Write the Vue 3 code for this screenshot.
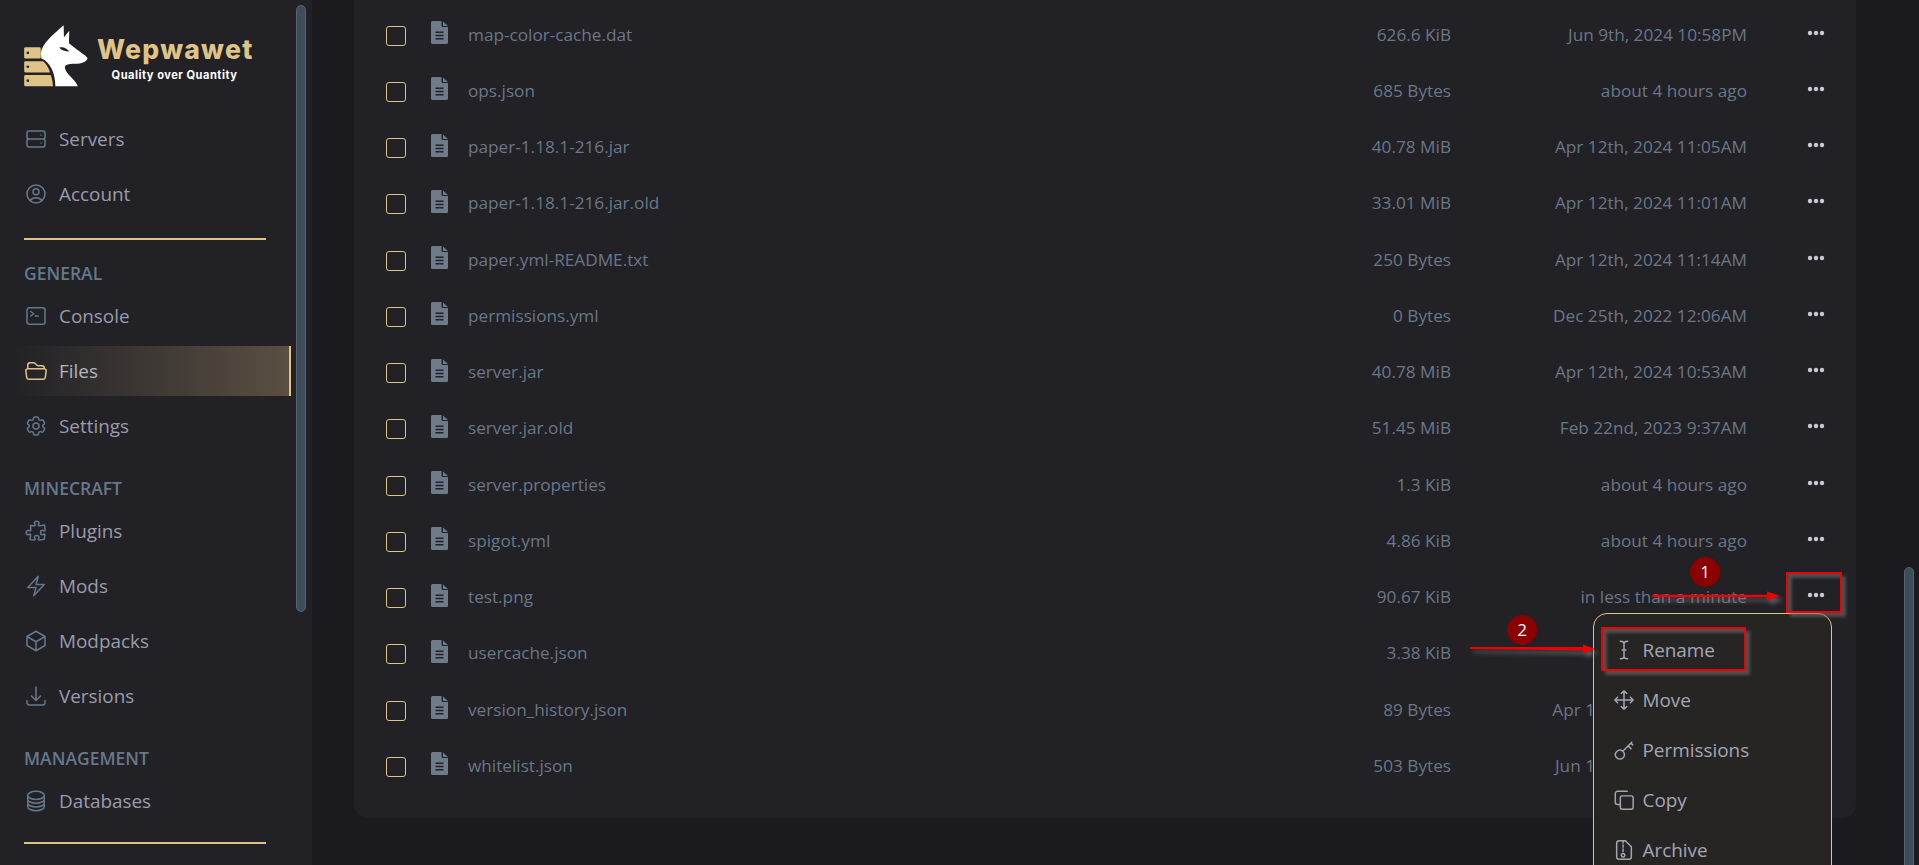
<script setup>
const icons = {
  server: 'M5 12h14M5 12a2 2 0 01-2-2V6a2 2 0 012-2h14a2 2 0 012 2v4a2 2 0 01-2 2M5 12a2 2 0 00-2 2v4a2 2 0 002 2h14a2 2 0 002-2v-4a2 2 0 00-2-2m-2-4h.01M17 16h.01',
  user: 'M17.982 18.725A7.488 7.488 0 0012 15.75a7.488 7.488 0 00-5.982 2.975m11.963 0a9 9 0 10-11.963 0m11.963 0A8.966 8.966 0 0112 21a8.966 8.966 0 01-5.982-2.275M15 9.75a3 3 0 11-6 0 3 3 0 016 0z',
  console: 'M6.75 7.5l3 2.25-3 2.25m4.5 0h3m-9 8.25h13.5A2.25 2.25 0 0021 18V6a2.25 2.25 0 00-2.25-2.25H5.25A2.25 2.25 0 003 6v12a2.25 2.25 0 002.25 2.25z',
  folder: 'M3.75 9.776c.112-.017.227-.026.344-.026h15.812c.117 0 .232.009.344.026m-16.5 0a2.25 2.25 0 00-1.883 2.542l.857 6a2.25 2.25 0 002.227 1.932H19.05a2.25 2.25 0 002.227-1.932l.857-6a2.25 2.25 0 00-1.883-2.542m-16.5 0V6A2.25 2.25 0 016 3.75h3.879a1.5 1.5 0 011.06.44l2.122 2.12a1.5 1.5 0 001.06.44H18A2.25 2.25 0 0120.25 9v.776',
  cog: 'M9.594 3.94c.09-.542.56-.94 1.11-.94h2.593c.55 0 1.02.398 1.11.94l.213 1.281c.063.374.313.686.645.87.074.04.147.083.22.127.324.196.72.257 1.075.124l1.217-.456a1.125 1.125 0 011.37.49l1.296 2.247a1.125 1.125 0 01-.26 1.431l-1.003.827c-.293.24-.438.613-.431.992a6.759 6.759 0 010 .255c-.007.378.138.75.43.99l1.005.828c.424.35.534.954.26 1.43l-1.298 2.247a1.125 1.125 0 01-1.369.491l-1.217-.456c-.355-.133-.75-.072-1.076.124a6.57 6.57 0 01-.22.128c-.331.183-.581.495-.644.869l-.213 1.28c-.09.543-.56.941-1.11.941h-2.594c-.55 0-1.02-.398-1.11-.94l-.213-1.281c-.062-.374-.312-.686-.644-.87a6.52 6.52 0 01-.22-.127c-.325-.196-.72-.257-1.076-.124l-1.217.456a1.125 1.125 0 01-1.369-.49l-1.297-2.247a1.125 1.125 0 01.26-1.431l1.004-.827c.292-.24.437-.613.43-.992a6.932 6.932 0 010-.255c.007-.378-.138-.75-.43-.99l-1.004-.828a1.125 1.125 0 01-.26-1.43l1.297-2.247a1.125 1.125 0 011.37-.491l1.216.456c.356.133.751.072 1.076-.124.072-.044.146-.087.22-.128.332-.183.582-.495.644-.869l.214-1.281zM15 12a3 3 0 11-6 0 3 3 0 016 0z',
  puzzle: 'M14.25 6.087c0-.355.186-.676.401-.959.221-.29.349-.634.349-1.003 0-1.036-1.007-1.875-2.25-1.875s-2.25.84-2.25 1.875c0 .369.128.713.349 1.003.215.283.401.604.401.959a.64.64 0 01-.657.643 48.39 48.39 0 01-4.163-.3c.186 1.613.293 3.25.315 4.907a.656.656 0 01-.658.663c-.355 0-.676-.186-.959-.401a1.647 1.647 0 00-1.003-.349c-1.036 0-1.875 1.007-1.875 2.25s.84 2.25 1.875 2.25c.369 0 .713-.128 1.003-.349.283-.215.604-.401.959-.401.31 0 .555.26.532.57a48.039 48.039 0 01-.642 5.056c1.518.19 3.058.309 4.616.354a.64.64 0 00.657-.643c0-.355-.186-.676-.401-.959a1.647 1.647 0 01-.349-1.003c0-1.035 1.008-1.875 2.25-1.875 1.243 0 2.25.84 2.25 1.875 0 .369-.128.713-.349 1.003-.215.283-.4.604-.4.959 0 .333.277.599.61.58a48.1 48.1 0 005.427-.63 48.05 48.05 0 00.582-4.717.532.532 0 00-.533-.57c-.355 0-.676.186-.959.401-.29.221-.634.349-1.003.349-1.035 0-1.875-1.007-1.875-2.25s.84-2.25 1.875-2.25c.37 0 .713.128 1.003.349.283.215.604.401.96.401a.656.656 0 00.658-.663 48.422 48.422 0 00-.37-5.36c-1.886.342-3.81.574-5.766.689a.578.578 0 01-.61-.58z',
  bolt: 'M3.75 13.5l10.5-11.25L12 10.5h8.25L9.75 21.75 12 13.5H3.75z',
  cube: 'M21 7.5l-9-5.25L3 7.5m18 0l-9 5.25m9-5.25v9l-9 5.25M3 7.5l9 5.25M3 7.5v9l9 5.25m0-9v9',
  download: 'M3 16.5v2.25A2.25 2.25 0 005.25 21h13.5A2.25 2.25 0 0021 18.75V16.5M16.5 12L12 16.5m0 0L7.5 12m4.5 4.5V3',
  db: 'M20.25 6.375c0 2.278-3.694 4.125-8.25 4.125S3.75 8.653 3.75 6.375m16.5 0c0-2.278-3.694-4.125-8.25-4.125S3.75 4.097 3.75 6.375m16.5 0v11.25c0 2.278-3.694 4.125-8.25 4.125s-8.25-1.847-8.25-4.125V6.375m16.5 0v3.75m-16.5-3.75v3.75m16.5 0v3.75C20.25 16.153 16.556 18 12 18s-8.25-1.847-8.25-4.125v-3.75m16.5 0c0 2.278-3.694 4.125-8.25 4.125s-8.25-1.847-8.25-4.125',
  rename: 'M8 2.500c2.500 0 4 .8 4 2.500v14c0 1.700-1.500 2.500-4 2.500M16 2.500c-2.500 0-4 .8-4 2.500v14c0 1.700 1.500 2.500 4 2.500M10 12h4',
  move: 'M12 2v20M2 12h20M9 5l3-3 3 3M9 19l3 3 3-3M5 9l-3 3 3 3M19 9l3 3-3 3',
  key: 'M10.700 13.300a4.900 4.900 0 1 1-6.900 6.900 4.900 4.900 0 0 1 6.900-6.900zM10.700 13.300 20.500 3.500M16.500 7.500l3 3M19.500 4.500l2 2',
  copy: 'M7.500 2.500h8M7 17H5A2.500 2.500 0 0 1 2.500 14.500V5A2.500 2.500 0 0 1 5 2.500h2.500M10 7.500h10a2 2 0 0 1 2 2v10.500a2 2 0 0 1-2 2H10a2 2 0 0 1-2-2V9.500a2 2 0 0 1 2-2z',
  archive: 'M7 2h6.500L20 8.500V19.500a2.500 2.500 0 0 1-2.500 2.500H6.500A2.500 2.500 0 0 1 4 19.500V5A3 3 0 0 1 7 2zM11 2v2.500M11 6.500v2.500M11 11v2.500M11 15.800a1.900 1.900 0 1 1-.01 0'
}

const groups = [
  { items: [{ n: 'Servers', i: 'server' }, { n: 'Account', i: 'user' }], divider: 'top' },
  { label: 'GENERAL', items: [{ n: 'Console', i: 'console' }, { n: 'Files', i: 'folder', active: true }, { n: 'Settings', i: 'cog' }] },
  { label: 'MINECRAFT', items: [{ n: 'Plugins', i: 'puzzle' }, { n: 'Mods', i: 'bolt' }, { n: 'Modpacks', i: 'cube' }, { n: 'Versions', i: 'download' }] },
  { label: 'MANAGEMENT', items: [{ n: 'Databases', i: 'db' }], divider: 'bottom' }
]

const files = [
  ['map-color-cache.dat', '626.6 KiB', 'Jun 9th, 2024 10:58PM'],
  ['ops.json', '685 Bytes', 'about 4 hours ago'],
  ['paper-1.18.1-216.jar', '40.78 MiB', 'Apr 12th, 2024 11:05AM'],
  ['paper-1.18.1-216.jar.old', '33.01 MiB', 'Apr 12th, 2024 11:01AM'],
  ['paper.yml-README.txt', '250 Bytes', 'Apr 12th, 2024 11:14AM'],
  ['permissions.yml', '0 Bytes', 'Dec 25th, 2022 12:06AM'],
  ['server.jar', '40.78 MiB', 'Apr 12th, 2024 10:53AM'],
  ['server.jar.old', '51.45 MiB', 'Feb 22nd, 2023 9:37AM'],
  ['server.properties', '1.3 KiB', 'about 4 hours ago'],
  ['spigot.yml', '4.86 KiB', 'about 4 hours ago'],
  ['test.png', '90.67 KiB', 'in less than a minute'],
  ['usercache.json', '3.38 KiB', '', true],
  ['version_history.json', '89 Bytes', 'Apr 1', true],
  ['whitelist.json', '503 Bytes', 'Jun 1', true]
]

const menu = [
  { n: 'Rename', i: 'rename' },
  { n: 'Move', i: 'move' },
  { n: 'Permissions', i: 'key' },
  { n: 'Copy', i: 'copy' },
  { n: 'Archive', i: 'archive' }
]
</script>

<template>
  <div class="page">
    <aside class="sidebar">
      <div class="logo">
        <svg class="logo-mark" viewBox="72 75 192 187" width="64" height="62">
          <rect x="72" y="142" width="50" height="34" rx="4" fill="#dfc387" />
          <path d="M76 184h52c10 6 18 20 22 34H76a4 4 0 0 1-4-4v-26a4 4 0 0 1 4-4z" fill="#dfc387" />
          <path d="M76 226h76c4 10 6 22 7 34H76a4 4 0 0 1-4-4v-26a4 4 0 0 1 4-4z" fill="#dfc387" />
          <circle cx="83" cy="159" r="4" fill="#212126" />
          <circle cx="83" cy="201" r="4" fill="#212126" />
          <circle cx="83" cy="243" r="4" fill="#212126" />
          <path d="M122 160C127 130 155 108 191 76L192 112L208 92L207 130L232 150C245 160 258 167 263 175C262 185 245 192 225 192C205 192 193 195 195 205C198 225 226 238 234 260L166 260C166 220 150 186 124 176Z" fill="#fff" />
          <path d="M178 143C190 139 200 145 208 155C195 155 185 152 178 143Z" fill="#212126" />
        </svg>
        <div class="logo-text">
          <div class="logo-title">Wepwawet</div>
          <div class="logo-sub">Quality over Quantity</div>
        </div>
      </div>
      <nav>
        <section v-for="g in groups" :key="g.items[0].n">
          <div v-if="g.label" class="label">{{ g.label }}</div>
          <a v-for="it in g.items" :key="it.n" class="nav-item" :class="{ active: it.active }">
            <svg class="nav-icon" viewBox="0 0 24 24" width="24" height="24" fill="none" stroke="currentColor" stroke-width="1.5" stroke-linecap="round" stroke-linejoin="round"><path :d="icons[it.i]" /></svg>
            <span>{{ it.n }}</span>
          </a>
          <div v-if="g.divider" class="divider" :class="g.divider"></div>
        </section>
      </nav>
      <div class="thumb thumb-left"></div>
    </aside>

    <main class="main">
      <div class="card">
        <div v-for="f in files" :key="f[0]" class="row">
          <span class="check"></span>
          <svg class="file-icon" viewBox="0 0 17 23" width="17" height="23">
            <path fill-rule="evenodd" d="M1.500 0H10.500V4.500a1.500 1.500 0 0 0 1.500 1.500H17V21.500a1.500 1.500 0 0 1-1.500 1.500h-14A1.500 1.500 0 0 1 0 21.500V1.500A1.500 1.500 0 0 1 1.500 0ZM4.500 10.500v1.500h8v-1.500ZM4.500 13.800v1.500h8v-1.500ZM4.500 17.100v1.500h8v-1.500Z" fill="#6e7b8b" />
            <path d="M12 0.500 17 5h-5z" fill="#6e7b8b" />
          </svg>
          <span class="name">{{ f[0] }}</span>
          <span class="size">{{ f[1] }}</span>
          <span class="date" :class="{ cut: f[3] }">{{ f[2] }}</span>
          <svg class="dots" viewBox="0 0 18 6" width="18" height="6"><circle cx="3" cy="3" r="2.200" /><circle cx="9" cy="3" r="2.200" /><circle cx="15" cy="3" r="2.200" /></svg>
        </div>
      </div>
    </main>

    <div class="thumb thumb-right"></div>

    <div class="menu">
      <div v-for="m in menu" :key="m.n" class="menu-item">
        <svg viewBox="0 0 24 24" width="22" height="22" fill="none" stroke="currentColor" stroke-width="1.600" stroke-linecap="round" stroke-linejoin="round"><path :d="icons[m.i]" /></svg>
        <span>{{ m.n }}</span>
      </div>
    </div>

    <svg class="arrows" viewBox="0 0 1919 865" width="1919" height="865">
      <g fill="#f00000" stroke="none">
        <path d="M1652 594.800H1767V591.500L1780 596 1767 600.500V597.200H1652Z" />
        <path d="M1470 647H1583V644.500L1595 649 1583 653.500V650.500L1470 649Z" />
      </g>
    </svg>
    <div class="box box-one"></div>
    <div class="box box-two"></div>
    <div class="badge badge-one">1</div>
    <div class="badge badge-two">2</div>
  </div>
</template>

<style>
html, body { margin: 0; background: #1b1b1f; }
</style>

<style scoped>
.page {
  position: relative;
  display: flex;
  width: 1919px;
  height: 865px;
  overflow: hidden;
  background: #1b1b1f;
  font-family: "Open Sans", "Noto Sans", sans-serif;
}
.sidebar {
  flex: 0 0 312px;
  box-sizing: border-box;
  background: #212126;
}
.logo {
  display: flex;
  height: 111.500px;
  padding: 25px 0 0 24px;
  box-sizing: border-box;
}
.logo-text {
  margin: 10px 0 0 9px;
  text-align: center;
  width: 155px;
}
.logo-title {
  font-family: Inter, sans-serif;
  font-weight: 800;
  font-size: 26.500px;
  line-height: 28px;
  letter-spacing: 1.300px;
  color: #dfc387;
  white-space: nowrap;
}
.logo-sub {
  margin-top: 5px;
  font-family: Inter, sans-serif;
  font-weight: 700;
  font-size: 11.100px;
  line-height: 14px;
  letter-spacing: .5px;
  color: #fff;
  white-space: nowrap;
}
.label {
  padding: 26px 0 7px 24px;
  font-size: 17.500px;
  line-height: 17px;
  font-weight: 600;
  color: #66788a;
}
.divider {
  height: 2px;
  margin: 16.500px 46px -1.500px 24px;
  background: #dfc387;
}
.divider.bottom { margin-top: 13.500px; }
.nav-item {
  position: relative;
  display: flex;
  align-items: center;
  height: 55px;
  padding-left: 24px;
  font-size: 18.900px;
  color: #9a9cab;
}
.nav-icon {
  position: relative;
  flex: none;
  margin-right: 11px;
  color: #66788a;
}
.nav-item span { position: relative; }
.nav-item.active { color: #b4b5bf; }
.nav-item.active .nav-icon { color: #dfc387; }
.nav-item.active::before {
  content: "";
  position: absolute;
  left: 10px;
  width: 281px;
  top: 2.500px;
  bottom: 2.500px;
  box-sizing: border-box;
  border-right: 2px solid #dfc387;
  background: linear-gradient(90deg, rgba(90, 79, 66, 0), #5a4f42);
}
.thumb {
  position: absolute;
  box-sizing: border-box;
  width: 10px;
  background: #3f4d5a;
  border: 1px solid #556472;
  border-radius: 5px;
}
.thumb-left { left: 296px; top: 5px; height: 607px; }
.thumb-right { left: 1904px; top: 567px; height: 320px; }
.main {
  flex: 1;
  padding: 0 63px 0 42px;
}
.card {
  padding: 6px 0 24px 32px;
  background: #212126;
  border-radius: 0 0 14px 14px;
}
.row {
  display: flex;
  align-items: center;
  height: 56.250px;
  font-size: 17.200px;
  color: #6b7786;
}
.check {
  flex: none;
  width: 20px;
  height: 20px;
  margin: 3px 25px 0 0;
  box-sizing: border-box;
  border: 1px solid #dfc387;
  border-radius: 3px;
}
.file-icon { flex: none; margin: -3px 21px 0 0; }
.name { flex: 1; margin-left: -1px; }
.size { width: 160px; text-align: right; }
.date { width: 296px; text-align: right; }
.date.cut { padding-right: 152px; box-sizing: border-box; }
.dots { flex: none; margin: -3px 31px 0 60px; fill: #c9cad3; }
.menu {
  position: absolute;
  left: 1593px;
  top: 613px;
  width: 239px;
  height: 290px;
  box-sizing: border-box;
  padding-top: 11px;
  background: #262524;
  border: 1px solid #dfc387;
  border-radius: 14px;
}
.menu-item {
  display: flex;
  align-items: center;
  height: 50.100px;
  padding-left: 19px;
  gap: 7.500px;
  font-size: 18.900px;
  color: #a4a6b4;
}
.arrows {
  position: absolute;
  left: 0;
  top: 0;
  pointer-events: none;
  filter: drop-shadow(3px 4px 2px rgba(120, 120, 120, .7));
}
.box {
  position: absolute;
  box-sizing: border-box;
  border: 2.500px solid #f00000;
  box-shadow: 4px 4px 3px rgba(110, 110, 110, .6), inset 4px 4px 3px rgba(110, 110, 110, .6);
}
.box-one { left: 1786px; top: 572px; width: 56px; height: 41px; }
.box-two { left: 1601px; top: 627px; width: 145px; height: 44px; }
.badge {
  position: absolute;
  width: 30px;
  height: 30px;
  border-radius: 50%;
  background: #8b0000;
  color: #fff;
  font-size: 17px;
  line-height: 30px;
  text-align: center;
}
.badge-one { left: 1690px; top: 557px; }
.badge-two { left: 1507px; top: 615px; }
</style>
